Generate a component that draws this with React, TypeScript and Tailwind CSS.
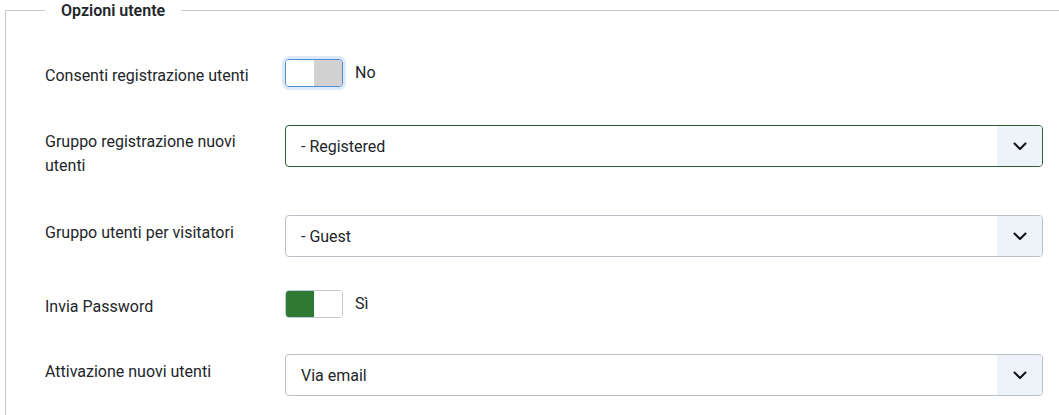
import React from "react";

const font = { fontFamily: "Roboto, 'Noto Sans', sans-serif" };

function Chevron() {
  return (
    <svg width="14" height="9" viewBox="0 0 14 9" fill="none">
      <path d="M1.5 1.5 L7 7 L12.5 1.5" stroke="#111" strokeWidth="2" strokeLinecap="round" strokeLinejoin="round" />
    </svg>
  );
}

function Select({ value, green }: { value: string; green?: boolean }) {
  return (
    <div
      className={`flex h-[42px] w-[758px] items-stretch overflow-hidden rounded-[4px] border bg-white ${
        green ? "border-[#2f5f36]" : "border-[#b9c1cb]"
      }`}
    >
      <div className="flex flex-1 items-center pl-[15px] pt-[1px] text-[16px] text-[#22262a]">{value}</div>
      <div className="flex w-[45px] items-center justify-center bg-[#eef2f9]">
        <Chevron />
      </div>
    </div>
  );
}

function Toggle({ on, label }: { on: boolean; label: string }) {
  return (
    <div className="flex items-center">
      {on ? (
        <div className="flex h-[28px] w-[58px] overflow-hidden rounded-[4px] border border-[#c3cad3] bg-white">
          <div className="w-1/2 bg-[#2e7a34]" />
          <div className="w-1/2 bg-white" />
        </div>
      ) : (
        <div className="flex h-[28px] w-[58px] overflow-hidden rounded-[4px] border border-[#4f8ad6] bg-white shadow-[0_0_0_3px_rgba(79,138,214,0.18)]">
          <div className="w-1/2 bg-white" />
          <div className="w-1/2 bg-[#d2d2d2]" />
        </div>
      )}
      <span className="ml-[12px] text-[16px] text-[#22262a]">{label}</span>
    </div>
  );
}

export default function App() {
  return (
    <div className="h-[415px] w-full overflow-hidden bg-white" style={font}>
      <fieldset className="ml-[5px] w-[1080px] border border-[#c5ccd4] pl-[39px] pt-[38px]">
        <legend className="px-4 text-[16px] font-semibold leading-[21px] text-[#22262a]">Opzioni utente</legend>
        <div className="flex items-start">
          <div className="w-[240px] pt-[5px] text-[16px] leading-[24px] text-[#22262a]">Consenti registrazione utenti</div>
          <Toggle on={false} label="No" />
        </div>
        <div className="mt-[37px] flex items-start">
          <div className="w-[240px] pr-[30px] pt-[5px] text-[16px] leading-[24px] text-[#22262a]">
            Gruppo registrazione nuovi utenti
          </div>
          <Select value="- Registered" green />
        </div>
        <div className="mt-[37px] flex items-start">
          <div className="w-[240px] pt-[6px] text-[16px] leading-[24px] text-[#22262a]">Gruppo utenti per visitatori</div>
          <Select value="- Guest" />
        </div>
        <div className="mt-[33px] flex items-start">
          <div className="w-[240px] pt-[5px] text-[16px] leading-[24px] text-[#22262a]">Invia Password</div>
          <Toggle on={true} label="Sì" />
        </div>
        <div className="mt-[35px] flex items-start">
          <div className="w-[240px] pt-[6px] text-[16px] leading-[24px] text-[#22262a]">Attivazione nuovi utenti</div>
          <Select value="Via email" />
        </div>
        <div className="h-[40px]" />
      </fieldset>
    </div>
  );
}
